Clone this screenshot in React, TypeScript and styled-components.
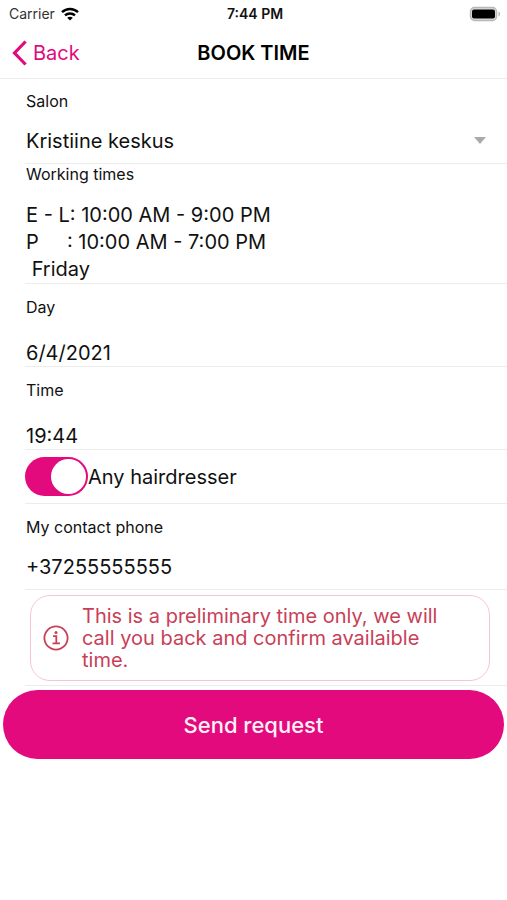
import React, { useState } from "react";
import styled, { createGlobalStyle } from "styled-components";

const pink = "#e20a7c";
const ink = "#111111";
const line = "#ececec";

const GlobalStyle = createGlobalStyle`
  *, *::before, *::after { box-sizing: border-box; }
  body {
    margin: 0;
    background: #ffffff;
    color: ${ink};
    font-family: Inter, "Liberation Sans", sans-serif;
  }
  button, input, select { font: inherit; color: inherit; }
`;

const Screen = styled.div`
  display: flex;
  flex-direction: column;
  min-height: 100vh;
`;

const StatusBar = styled.div`
  display: grid;
  grid-template-columns: 1fr auto 1fr;
  align-items: center;
  height: 27px;
  padding: 0 6px 0 9px;
  font-size: 14px;
  line-height: 20px;
`;

const Carrier = styled.span`
  display: flex;
  align-items: center;
  gap: 6px;
  color: #333333;
`;

const Clock = styled.span`
  font-size: 14px;
  font-weight: 600;
`;

const Battery = styled.svg`
  justify-self: end;
`;

const NavBar = styled.header`
  display: grid;
  grid-template-columns: 1fr auto 1fr;
  align-items: center;
  height: 52px;
  padding: 0 12px;
  border-bottom: 1px solid ${line};
`;

const BackButton = styled.button`
  display: flex;
  align-items: center;
  justify-self: start;
  gap: 6px;
  padding: 0;
  border: 0;
  background: none;
  color: ${pink};
  font-size: 20px;
  line-height: 28px;
  cursor: pointer;
`;

const Title = styled.h1`
  margin: 0;
  font-size: 20px;
  line-height: 28px;
  font-weight: 600;
  color: #000000;
`;

const Form = styled.form`
  display: flex;
  flex-direction: column;
`;

const Row = styled.div<{ $top?: number; $bottom?: number; $gap?: number }>`
  display: flex;
  flex-direction: column;
  gap: ${(p) => p.$gap ?? 16}px;
  margin-left: 25px;
  padding: ${(p) => p.$top ?? 13}px 0 ${(p) => p.$bottom ?? 0}px 1px;
  border-bottom: 1px solid ${line};
`;

const Label = styled.label`
  font-size: 16px;
  line-height: 20px;
`;

const Caption = styled.h2`
  margin: 0;
  font-size: 16px;
  line-height: 20px;
  font-weight: 400;
`;

const Field = styled.input`
  width: 100%;
  height: 27px;
  padding: 0;
  border: 0;
  outline: 0;
  background: none;
  font-size: 20px;
`;

const SelectWrap = styled.div`
  display: flex;
  align-items: center;
  padding-right: 21px;
`;

const Select = styled.select`
  flex: 1;
  height: 27px;
  padding: 0;
  border: 0;
  outline: 0;
  background: none;
  appearance: none;
  font-size: 20px;
`;

const Hours = styled.div`
  font-size: 20px;
  line-height: 27px;
  white-space: pre;
`;

const SwitchRow = styled.label`
  display: flex;
  align-items: center;
  height: 54px;
  margin-left: 25px;
  border-bottom: 1px solid ${line};
  font-size: 20px;
`;

const Switch = styled.input`
  display: flex;
  align-items: center;
  appearance: none;
  width: 63px;
  height: 39px;
  margin: 0;
  padding: 2px;
  border-radius: 20px;
  background: #e5e5ea;
  cursor: pointer;

  &::before {
    content: "";
    width: 35px;
    height: 35px;
    border-radius: 50%;
    background: #ffffff;
  }

  &:checked {
    justify-content: flex-end;
    background: ${pink};
  }
`;

const NoticeRow = styled.div`
  margin-left: 25px;
  padding: 5px 17px 4px 5px;
  border-bottom: 1px solid ${line};
`;

const Notice = styled.div`
  display: flex;
  align-items: center;
  gap: 13px;
  padding: 9px 24px 9px 12px;
  border: 1px solid #f6c6d0;
  border-radius: 20px;
  color: #c83f58;
  font-size: 20px;
  line-height: 22px;
`;

const NoticeIcon = styled.svg`
  flex: none;
`;

const NoticeText = styled.p`
  margin: 0;
`;

const SendButton = styled.button`
  height: 69px;
  margin: 4px 3px 0;
  border: 0;
  border-radius: 35px;
  background: ${pink};
  color: #fff0f8;
  font-size: 22px;
  font-weight: 500;
  cursor: pointer;
`;

export default function App() {
  const [anyone, setAnyone] = useState(true);

  return (
    <Screen>
      <GlobalStyle />
      <StatusBar>
        <Carrier>
          Carrier
          <svg width="18" height="14" viewBox="0 0 18 14" fill="none" stroke="#000" strokeWidth="2.5" aria-hidden="true">
            <path d="M1 5.1C5.5.8 12.5.8 17 5.1" />
            <path d="M4 8.4c2.8-2.6 7.2-2.6 10 0" />
            <path d="M6.2 10.7c1.6-1.4 4-1.4 5.6 0L9 13.6z" fill="#000" stroke="none" />
          </svg>
        </Carrier>
        <Clock>7:44 PM</Clock>
        <Battery width="32" height="16" viewBox="0 0 32 16" aria-hidden="true">
          <rect x="1.500" y="1.500" width="26" height="13" rx="4" fill="#ddd" stroke="#b8b8b8" strokeWidth="1.5" />
          <rect x="3" y="3.500" width="23" height="9" rx="2" fill="#000" />
          <path d="M29.500 5.500c2 .6 2 4.400 0 5z" fill="#b8b8b8" />
        </Battery>
      </StatusBar>
      <NavBar>
        <BackButton type="button">
          <svg width="15" height="26" viewBox="0 0 15 26" fill="none" stroke={pink} strokeWidth="3.2" aria-hidden="true">
            <path d="M13.600 1.500 2.500 13l11.100 11.500" />
          </svg>
          Back
        </BackButton>
        <Title>BOOK TIME</Title>
      </NavBar>
      <Form onSubmit={(e) => e.preventDefault()}>
        <Row $top={12} $bottom={9}>
          <Label htmlFor="salon">Salon</Label>
          <SelectWrap>
            <Select id="salon" defaultValue="kristiine">
              <option value="kristiine">Kristiine keskus</option>
            </Select>
            <svg width="12" height="7" viewBox="0 0 12 7" aria-hidden="true">
              <path d="M0 0h12L6 7z" fill="#aaaaaa" />
            </svg>
          </SelectWrap>
        </Row>
        <Row $top={0} $gap={18}>
          <Caption>Working times</Caption>
          <Hours>{"E - L: 10:00 AM - 9:00 PM\nP     : 10:00 AM - 7:00 PM\n Friday"}</Hours>
        </Row>
        <Row $gap={22}>
          <Label htmlFor="day">Day</Label>
          <Field id="day" defaultValue="6/4/2021" />
        </Row>
        <Row $gap={22}>
          <Label htmlFor="time">Time</Label>
          <Field id="time" defaultValue="19:44" />
        </Row>
        <SwitchRow>
          <Switch type="checkbox" role="switch" checked={anyone} onChange={(e) => setAnyone(e.target.checked)} />
          Any hairdresser
        </SwitchRow>
        <Row $bottom={9}>
          <Label htmlFor="phone">My contact phone</Label>
          <Field id="phone" type="tel" defaultValue="+37255555555" />
        </Row>
        <NoticeRow>
          <Notice>
            <NoticeIcon width="26" height="26" viewBox="0 0 26 26" fill="none" stroke="#c83f58" strokeWidth="1.800" aria-hidden="true">
              <circle cx="13" cy="13" r="11.600" />
              <path d="M10 11.200h3.300V18M9.500 18.300h7.500" />
              <circle cx="13" cy="7.600" r="1.500" fill="#c83f58" stroke="none" />
            </NoticeIcon>
            <NoticeText>This is a preliminary time only, we will call you back and confirm availaible time.</NoticeText>
          </Notice>
        </NoticeRow>
        <SendButton type="submit">Send request</SendButton>
      </Form>
    </Screen>
  );
}
